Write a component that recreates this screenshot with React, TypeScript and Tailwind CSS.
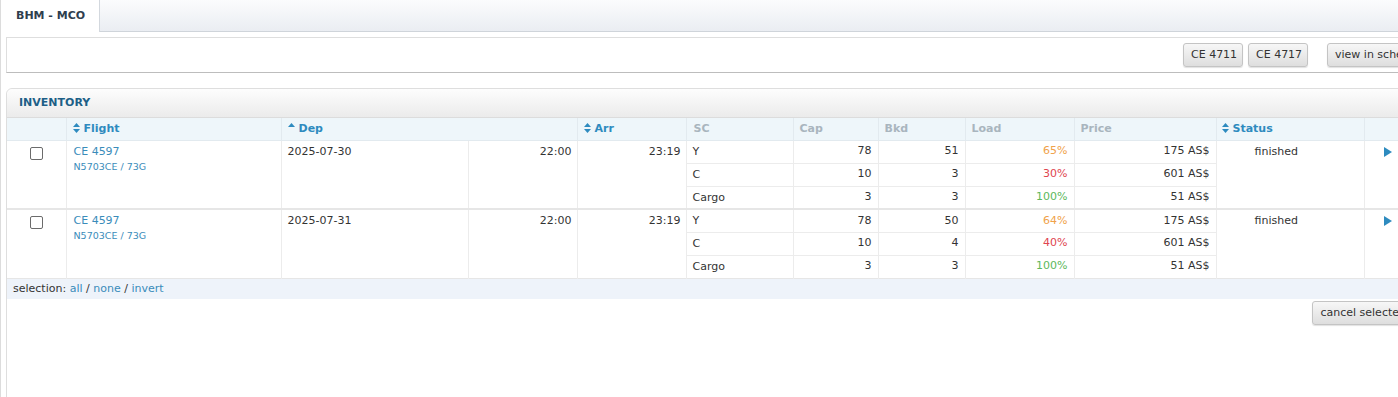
import React from "react";

function SortBoth() {
  return (
    <svg width="7" height="10" viewBox="0 0 7 10" className="inline-block mr-[4px] -mt-[2px] align-middle">
      <path d="M3.5 0 L7 4 L0 4 Z" fill="#2e8bbf" />
      <path d="M0 6 L7 6 L3.5 10 Z" fill="#2e8bbf" />
    </svg>
  );
}
function SortUp() {
  return (
    <svg width="7" height="10" viewBox="0 0 7 10" className="inline-block mr-[4px] -mt-[4px] align-middle">
      <path d="M3.5 1 L7 5 L0 5 Z" fill="#2e8bbf" />
    </svg>
  );
}

type Sub = { sc: string; cap: number; bkd: number; load: string; color: string; price: string };
type Flight = { date: string; subs: Sub[] };

const flights: Flight[] = [
  {
    date: "2025-07-30",
    subs: [
      { sc: "Y", cap: 78, bkd: 51, load: "65%", color: "text-[#f0a24a]", price: "175 AS$" },
      { sc: "C", cap: 10, bkd: 3, load: "30%", color: "text-[#e0454f]", price: "601 AS$" },
      { sc: "Cargo", cap: 3, bkd: 3, load: "100%", color: "text-[#5cb85c]", price: "51 AS$" },
    ],
  },
  {
    date: "2025-07-31",
    subs: [
      { sc: "Y", cap: 78, bkd: 50, load: "64%", color: "text-[#f0a24a]", price: "175 AS$" },
      { sc: "C", cap: 10, bkd: 4, load: "40%", color: "text-[#e0454f]", price: "601 AS$" },
      { sc: "Cargo", cap: 3, bkd: 3, load: "100%", color: "text-[#5cb85c]", price: "51 AS$" },
    ],
  },
];

const btn =
  "h-[24px] px-[7px] rounded-[3px] border border-[#c4c4c4] bg-gradient-to-b from-[#f7f7f7] to-[#dedede] text-[11px] text-[#333] shadow-[0_1px_1px_rgba(0,0,0,0.12)] whitespace-nowrap";

export default function App() {
  return (
    <div className="w-[1398px] h-[397px] overflow-hidden bg-white font-['DejaVu_Sans',Verdana,sans-serif] text-[11px] text-[#333]">
      <div className="w-[1450px] h-[397px] border-l border-[#dcdcdc]">
        {/* tab bar */}
        <div className="flex h-[32px]">
          <div className="w-[99px] bg-white border-r border-[#d3d8de] flex items-center pl-[15px] font-bold text-[11px] text-[#2f3e4e]">
            BHM - MCO
          </div>
          <div className="flex-1 bg-gradient-to-b from-[#fbfcfd] to-[#eaedf2] border-b border-[#cfd4da]" />
        </div>

        <div className="pl-[5px]">
          {/* top box */}
          <div className="mt-[5px] h-[36px] border border-[#dedede] border-b-[#bdbdbd] flex items-center">
            <button className={btn + " w-[60px] px-0 ml-[1176px]"}>CE 4711</button>
            <button className={btn + " w-[60px] px-0 ml-[5px]"}>CE 4717</button>
            <button className={btn + " ml-[19px]"}>view in schedule</button>
          </div>

          {/* inventory panel */}
          <div className="mt-[15px] border border-[#dedede] rounded-tl-[6px] h-[330px]">
            <div className="h-[29px] rounded-tl-[6px] bg-gradient-to-b from-[#fdfdfd] to-[#ebebeb] border-b border-[#dcdcdc] flex items-center pl-[12px] font-bold text-[11px] text-[#1d5f87]">
              INVENTORY
            </div>
            <table className="table-fixed border-collapse w-[1411px]">
              <colgroup>
                <col className="w-[59px]" />
                <col className="w-[215px]" />
                <col className="w-[187px]" />
                <col className="w-[109px]" />
                <col className="w-[109px]" />
                <col className="w-[107px]" />
                <col className="w-[85px]" />
                <col className="w-[87px]" />
                <col className="w-[109px]" />
                <col className="w-[142px]" />
                <col className="w-[148px]" />
                <col className="w-[54px]" />
              </colgroup>
              <thead>
                <tr className="h-[22px] bg-[#eef6fa] text-left font-bold text-[11px]">
                  <th className="border-r border-b border-[#e2eaef]"></th>
                  <th className="border-r border-b border-[#e2eaef] pl-[6px] text-[#2e8bbf]"><SortBoth />Flight</th>
                  <th colSpan={2} className="border-r border-b border-[#e2eaef] pl-[6px] text-[#2e8bbf]"><SortUp />Dep</th>
                  <th className="border-r border-b border-[#e2eaef] pl-[6px] text-[#2e8bbf]"><SortBoth />Arr</th>
                  <th className="border-r border-b border-[#e2eaef] pl-[7px] text-[#a9b5be]">SC</th>
                  <th className="border-r border-b border-[#e2eaef] pl-[6px] text-[#a9b5be]">Cap</th>
                  <th className="border-r border-b border-[#e2eaef] pl-[6px] text-[#a9b5be]">Bkd</th>
                  <th className="border-r border-b border-[#e2eaef] pl-[6px] text-[#a9b5be]">Load</th>
                  <th className="border-r border-b border-[#e2eaef] pl-[6px] text-[#a9b5be]">Price</th>
                  <th className="border-r border-b border-[#e2eaef] pl-[5px] text-[#2e8bbf]"><SortBoth />Status</th>
                  <th className="border-b border-[#e2eaef]"></th>
                </tr>
              </thead>
              <tbody>
                {flights.map((f, fi) =>
                  f.subs.map((s, si) => (
                    <tr
                      key={fi + "-" + si}
                      className={
                        "h-[23px] " +
                        (si === 2 && fi === 0 ? "border-b-2 border-[#e6e6e6]" : "")
                      }
                    >
                      {si === 0 && (
                        <>
                          <td rowSpan={3} className="align-top border-r border-[#ececec] text-center pt-[6px]">
                            <span className="inline-block w-[13px] h-[13px] border border-[#6b6b6b] rounded-[2px] bg-white" />
                          </td>
                          <td rowSpan={3} className="align-top border-r border-[#ececec] pl-[7px] pt-[4px] leading-[13px]">
                            <div className="text-[#3a8cba]">CE 4597</div>
                            <div className="text-[9.5px] leading-[12px] mt-[3px] text-[#3a8cba]">N5703CE / 73G</div>
                          </td>
                          <td rowSpan={3} className="align-top border-r border-[#ececec] pl-[6px] pt-[4px] leading-[13px]">
                            {f.date}
                          </td>
                          <td rowSpan={3} className="align-top border-r border-[#ececec] pr-[5px] pt-[4px] leading-[13px] text-right">
                            22:00
                          </td>
                          <td rowSpan={3} className="align-top border-r border-[#ececec] pr-[5px] pt-[4px] leading-[13px] text-right">
                            23:19
                          </td>
                        </>
                      )}
                      <td className={"border-r border-[#ececec] pl-[6px] leading-[13px] " + (si < 2 ? "border-b" : "")}>{s.sc}</td>
                      <td className={"border-r border-[#ececec] pr-[6px] text-right " + (si < 2 ? "border-b" : "")}>{s.cap}</td>
                      <td className={"border-r border-[#ececec] pr-[6px] text-right " + (si < 2 ? "border-b" : "")}>{s.bkd}</td>
                      <td className={"border-r border-[#ececec] pr-[6px] text-right " + s.color + " " + (si < 2 ? "border-b" : "")}>{s.load}</td>
                      <td className={"border-r border-[#ececec] pr-[6px] text-right " + (si < 2 ? "border-b" : "")}>{s.price}</td>
                      {si === 0 && (
                        <>
                          <td rowSpan={3} className="align-top border-r border-[#ececec] pl-[38px] pt-[4px] leading-[13px]">
                            finished
                          </td>
                          <td rowSpan={3} className="align-top pl-[19px] pt-[6px]">
                            <svg width="8" height="10" viewBox="0 0 8 10">
                              <path d="M0 0 L8 5 L0 10 Z" fill="#2e8bbf" />
                            </svg>
                          </td>
                        </>
                      )}
                    </tr>
                  ))
                )}
                <tr className="h-[21px] bg-[#eef3fa] border-t border-[#e6e6e6]">
                  <td colSpan={12} className="pl-[6px]">
                    selection: <span className="text-[#3a8cba]">all</span> /{" "}
                    <span className="text-[#3a8cba]">none</span> /{" "}
                    <span className="text-[#3a8cba]">invert</span>
                  </td>
                </tr>
              </tbody>
            </table>
            <div className="flex justify-end pr-[35px] pt-[2px]">
              <button className={btn}>cancel selected</button>
            </div>
          </div>
        </div>
      </div>
    </div>
  );
}
